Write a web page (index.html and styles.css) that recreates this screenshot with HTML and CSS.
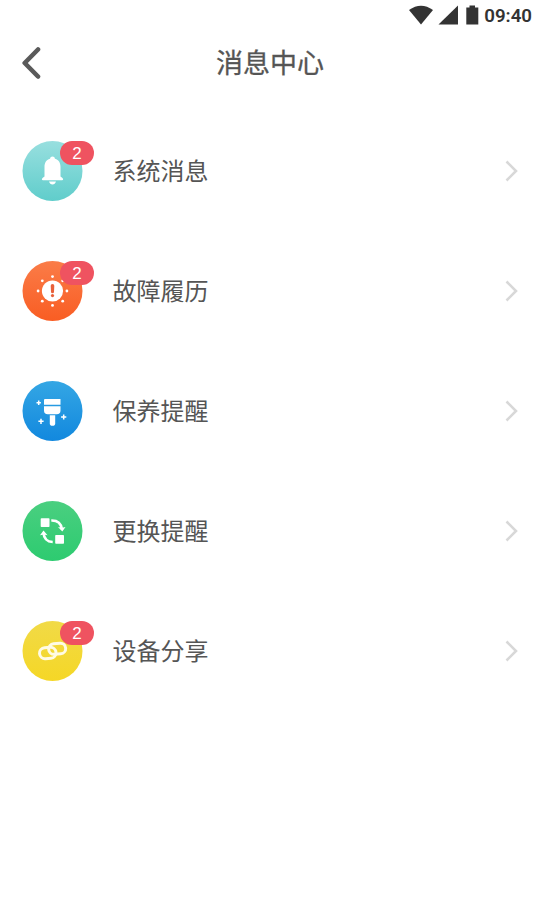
FILE: index.html
```
<!DOCTYPE html>
<html lang="zh-CN">
<head>
<meta charset="utf-8">
<title>消息中心</title>
<link rel="stylesheet" href="styles.css">
</head>
<body>
<div class="status">
  <svg class="status-icons" width="72" height="30" viewBox="0 0 72 30">
    <path d="M1 10Q13 1.500 25 10L13 24.500Z"/>
    <path d="M50 5.500V24.500H30.500Z"/>
    <path d="M61.500 5.500h5.500v2h3.300v17H58.300v-17h3.200z"/>
  </svg>
  <span class="time">09:40</span>
</div>
<header class="header">
  <svg class="back" width="20" height="34" viewBox="0 0 20 34"><path d="M17 3.500L3.700 17L17 30.500"/></svg>
  <h1 class="title">消息中心</h1>
</header>
<main class="list">
  <div class="row">
    <div class="icon">
      <svg width="61" height="60" viewBox="-.5 0 61 60">
        <defs><linearGradient id="teal" x2="0" y2="1"><stop stop-color="#98dfdf"/><stop offset="1" stop-color="#60cdcb"/></linearGradient></defs>
        <circle cx="30" cy="30" r="30" fill="url(#teal)"/>
        <path fill="#fff" d="M30 15.500a2.600 2.600 0 0 1 2.500 2.300C36.500 19 38 22 38 26v9.500l2 1.500q1.500 2-.5 2.300h-19q-2-.3-.5-2.300l2-1.500V26c0-4 1.500-7 5.500-8.200A2.600 2.600 0 0 1 30 15.500zM26.500 40.500h7q-1 3-3.500 3t-3.500-3z"/>
      </svg>
      <span class="badge">2</span>
    </div>
    <span class="label">系统消息</span>
    <svg class="arrow" width="14" height="22" viewBox="0 0 14 22"><path d="M2.500 1.500L12 11L2.500 20.500"/></svg>
  </div>
  <div class="row">
    <div class="icon">
      <svg width="61" height="60" viewBox="-.5 0 61 60">
        <defs><linearGradient id="orange" x2="0" y2="1"><stop stop-color="#fa7c48"/><stop offset="1" stop-color="#f95d23"/></linearGradient></defs>
        <circle cx="30" cy="30" r="30" fill="url(#orange)"/>
        <g fill="#fff">
          <circle cx="30" cy="30" r="10.600"/>
          <circle cx="30" cy="15.600" r="1.400"/><circle cx="30" cy="44.400" r="1.400"/>
          <circle cx="15.600" cy="30" r="1.400"/><circle cx="44.400" cy="30" r="1.400"/>
          <circle cx="19.800" cy="19.800" r="1.400"/><circle cx="40.200" cy="19.800" r="1.400"/>
          <circle cx="19.800" cy="40.200" r="1.400"/><circle cx="40.200" cy="40.200" r="1.400"/>
        </g>
        <path fill="#e8603a" d="M28.200 24.800a1.800 1.800 0 0 1 3.600 0l-.3 6a1.500 1.500 0 0 1-3 0z"/>
        <circle cx="30" cy="34.600" r="1.600" fill="#e8603a"/>
      </svg>
      <span class="badge">2</span>
    </div>
    <span class="label">故障履历</span>
    <svg class="arrow" width="14" height="22" viewBox="0 0 14 22"><path d="M2.500 1.500L12 11L2.500 20.500"/></svg>
  </div>
  <div class="row">
    <div class="icon">
      <svg width="61" height="60" viewBox="-.5 0 61 60">
        <defs><linearGradient id="blue" x2="0" y2="1"><stop stop-color="#34a6e4"/><stop offset="1" stop-color="#1288de"/></linearGradient></defs>
        <circle cx="30" cy="30" r="30" fill="url(#blue)"/>
        <g fill="#fff">
          <path d="M22.500 18h15.500v5.800H21.500V19q0-1 1-1z"/>
          <path d="M21.500 25.300H38v4.200q0 3.800-3.800 3.800h-8.900q-3.800 0-3.800-3.800z"/>
          <path d="M27.300 34.200h5.400v8q0 2.600-2.700 2.600t-2.700-2.600z"/>
        </g>
        <path stroke="#fff" stroke-width="1.500" d="M16.200 19.500v4.400M14 21.700h4.400M18.500 37.700v5.200M15.900 40.300h5.200M41.200 33.400v5.200M38.600 36h5.200"/>
      </svg>
    </div>
    <span class="label">保养提醒</span>
    <svg class="arrow" width="14" height="22" viewBox="0 0 14 22"><path d="M2.500 1.500L12 11L2.500 20.500"/></svg>
  </div>
  <div class="row">
    <div class="icon">
      <svg width="61" height="60" viewBox="-.5 0 61 60">
        <defs><linearGradient id="green" x2="0" y2="1"><stop stop-color="#4acf80"/><stop offset="1" stop-color="#2dcb70"/></linearGradient></defs>
        <circle cx="30" cy="30" r="30" fill="url(#green)"/>
        <g fill="#fff">
          <rect x="18.200" y="17.200" width="8.800" height="8.800" rx=".8"/>
          <rect x="32.700" y="34" width="8.800" height="8.800" rx=".8"/>
          <path d="M35.500 26l4 .8 3.500-.8-3.200 4.500zM17.500 34.200l3.500-4.700 4 4.700-4-.8z"/>
        </g>
        <path fill="none" stroke="#fff" stroke-width="2.700" d="M28.800 19.500C34.500 19.300 38.500 22 39.300 28M30.200 41C25 40.800 21.500 37.500 21 32"/>
      </svg>
    </div>
    <span class="label">更换提醒</span>
    <svg class="arrow" width="14" height="22" viewBox="0 0 14 22"><path d="M2.500 1.500L12 11L2.500 20.500"/></svg>
  </div>
  <div class="row">
    <div class="icon">
      <svg width="61" height="60" viewBox="-.5 0 61 60">
        <defs><linearGradient id="yellow" x2="0" y2="1"><stop stop-color="#f1da47"/><stop offset="1" stop-color="#f5d726"/></linearGradient></defs>
        <circle cx="30" cy="30" r="30" fill="url(#yellow)"/>
        <g fill="none" stroke="#fffbe5" stroke-width="3">
          <rect x="17" y="26.500" width="16.500" height="11" rx="5.500" transform="rotate(-5 25 32)"/>
          <rect x="26.200" y="22.500" width="17" height="10.500" rx="5.250" transform="rotate(-5 35 28)"/>
        </g>
      </svg>
      <span class="badge">2</span>
    </div>
    <span class="label">设备分享</span>
    <svg class="arrow" width="14" height="22" viewBox="0 0 14 22"><path d="M2.500 1.500L12 11L2.500 20.500"/></svg>
  </div>
</main>
</body>
</html>
```
FILE: styles.css
```
body {
  margin: 0;
  background: #fff;
  color: #555;
  font-family: "Noto Sans CJK SC", sans-serif;
}
.status {
  display: flex;
  justify-content: flex-end;
  align-items: center;
  height: 30px;
  padding-right: 8px;
  gap: 4px;
}
.status-icons { fill: #333; }
.time {
  padding-top: 2px;
  font: 600 18.700px/30px Roboto, sans-serif;
  color: #333;
}
.header {
  display: grid;
  grid-template-columns: 60px 1fr 60px;
  align-items: center;
  height: 66px;
}
.back {
  margin-left: 21px;
  fill: none;
  stroke: #5a5a5a;
  stroke-width: 4.600;
  stroke-linecap: round;
  stroke-linejoin: round;
}
.title {
  margin: 0;
  padding-bottom: 2px;
  text-align: center;
  font-size: 27px;
  line-height: 40px;
  font-weight: 400;
  -webkit-text-stroke: 0.3px #555;
}
.list { padding-top: 15px; }
.row {
  display: flex;
  align-items: center;
  height: 120px;
  padding: 0 22px;
}
.icon {
  position: relative;
  width: 61px;
  height: 60px;
}
.icon svg { display: block; }
.badge {
  position: absolute;
  left: 38px;
  top: 0;
  width: 34px;
  height: 24px;
  border-radius: 12px;
  background: #ef5360;
  color: #fff;
  text-align: center;
  font: 17px/25px "Liberation Sans", sans-serif;
}
.label {
  flex: 1;
  margin-left: 29.500px;
  padding-bottom: 2px;
  font-size: 24px;
  line-height: 36px;
}
.arrow {
  fill: none;
  stroke: #d8d8d8;
  stroke-width: 2.600;
}
```
